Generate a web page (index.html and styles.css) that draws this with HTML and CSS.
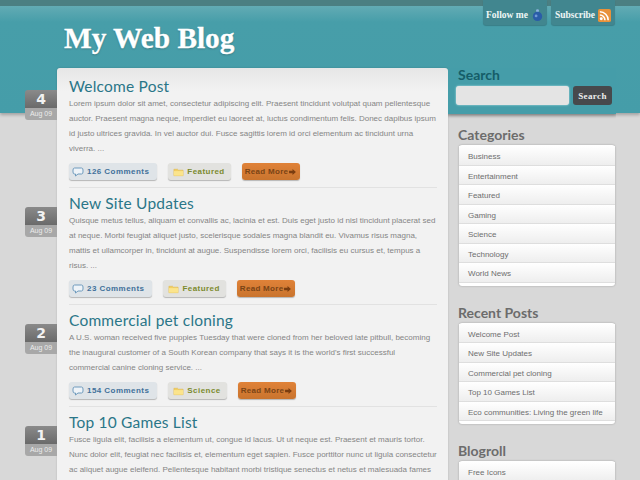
FILE: index.html
```html
<!DOCTYPE html>
<html lang="en">
<head>
<meta charset="utf-8">
<title>My Web Blog</title>
<link rel="stylesheet" href="styles.css">
</head>
<body>
<header class="header">
  <div class="header-links">
    <a class="hlink">Follow me
      <svg width="13" height="14" viewBox="0 0 14 14"><circle cx="7" cy="8.500" r="5" fill="#2a5da8"/><circle cx="7" cy="2.500" r="1.600" fill="#8fb4e0"/><path d="M6.300 3.500h1.400v3H6.300z" fill="#2a5da8"/><circle cx="5.500" cy="8" r="1.500" fill="#6f9ad6"/></svg>
    </a>
    <a class="hlink">Subscribe
      <svg width="13" height="13" viewBox="0 0 14 14"><rect width="14" height="14" rx="2" fill="#e8923a"/><circle cx="3.500" cy="10.500" r="1.600" fill="#fff"/><path d="M2 6.500a5.500 5.500 0 0 1 5.500 5.500M2 3a9 9 0 0 1 9 9" fill="none" stroke="#fff" stroke-width="1.700"/></svg>
    </a>
  </div>
  <h1 class="site-title">My Web Blog</h1>
</header>
<div class="layout">
  <main class="panel">
    <article class="post">
      <div class="date"><b>4</b><span>Aug 09</span></div>
      <h2>Welcome Post</h2>
      <p>Lorem ipsum dolor sit amet, consectetur adipiscing elit. Praesent tincidunt volutpat quam pellentesque auctor. Praesent magna neque, imperdiet eu laoreet at, luctus condimentum felis. Donec dapibus ipsum id justo ultrices gravida. In vel auctor dui. Fusce sagittis lorem id orci elementum ac tincidunt urna viverra. ...</p>
      <div class="meta">
        <a class="btn comments"><svg class="ico" width="12" height="10" viewBox="0 0 12 10"><path d="M2.500 1h7Q11 1 11 3v2Q11 7 9.500 7H6L3.500 9V7H2.500Q1 7 1 5V3Q1 1 2.500 1z" fill="#eef3f8" stroke="#6f9bbd"/></svg>126 Comments</a>
        <a class="btn cat"><svg class="ico" width="11" height="10" viewBox="0 0 12 10"><path d="M1 2h4l1 1h5v6H1z" fill="#f3cf62" stroke="#e0b84a" stroke-width=".6"/><path d="M1 4h10v5H1z" fill="#fbe48c"/></svg>Featured</a>
        <a class="btn more">Read More<svg class="arrow" width="7" height="6" viewBox="0 0 8 7"><path d="M0 2h4V0l4 3.500L4 7V5H0z" fill="#7a3d10"/></svg></a>
      </div>
    </article>
    <article class="post">
      <div class="date"><b>3</b><span>Aug 09</span></div>
      <h2>New Site Updates</h2>
      <p>Quisque metus tellus, aliquam et convallis ac, lacinia et est. Duis eget justo id nisl tincidunt placerat sed at neque. Morbi feugiat aliquet justo, scelerisque sodales magna blandit eu. Vivamus risus magna, mattis et ullamcorper in, tincidunt at augue. Suspendisse lorem orci, facilisis eu cursus et, tempus a risus. ...</p>
      <div class="meta">
        <a class="btn comments"><svg class="ico" width="12" height="10" viewBox="0 0 12 10"><path d="M2.500 1h7Q11 1 11 3v2Q11 7 9.500 7H6L3.500 9V7H2.500Q1 7 1 5V3Q1 1 2.500 1z" fill="#eef3f8" stroke="#6f9bbd"/></svg>23 Comments</a>
        <a class="btn cat"><svg class="ico" width="11" height="10" viewBox="0 0 12 10"><path d="M1 2h4l1 1h5v6H1z" fill="#f3cf62" stroke="#e0b84a" stroke-width=".6"/><path d="M1 4h10v5H1z" fill="#fbe48c"/></svg>Featured</a>
        <a class="btn more">Read More<svg class="arrow" width="7" height="6" viewBox="0 0 8 7"><path d="M0 2h4V0l4 3.500L4 7V5H0z" fill="#7a3d10"/></svg></a>
      </div>
    </article>
    <article class="post">
      <div class="date"><b>2</b><span>Aug 09</span></div>
      <h2>Commercial pet cloning</h2>
      <p>A U.S. woman received five puppies Tuesday that were cloned from her beloved late pitbull, becoming the inaugural customer of a South Korean company that says it is the world's first successful commercial canine cloning service. ...</p>
      <div class="meta">
        <a class="btn comments"><svg class="ico" width="12" height="10" viewBox="0 0 12 10"><path d="M2.500 1h7Q11 1 11 3v2Q11 7 9.500 7H6L3.500 9V7H2.500Q1 7 1 5V3Q1 1 2.500 1z" fill="#eef3f8" stroke="#6f9bbd"/></svg>154 Comments</a>
        <a class="btn cat"><svg class="ico" width="11" height="10" viewBox="0 0 12 10"><path d="M1 2h4l1 1h5v6H1z" fill="#f3cf62" stroke="#e0b84a" stroke-width=".6"/><path d="M1 4h10v5H1z" fill="#fbe48c"/></svg>Science</a>
        <a class="btn more">Read More<svg class="arrow" width="7" height="6" viewBox="0 0 8 7"><path d="M0 2h4V0l4 3.500L4 7V5H0z" fill="#7a3d10"/></svg></a>
      </div>
    </article>
    <article class="post">
      <div class="date"><b>1</b><span>Aug 09</span></div>
      <h2>Top 10 Games List</h2>
      <p>Fusce ligula elit, facilisis a elementum ut, congue id lacus. Ut ut neque est. Praesent et mauris tortor. Nunc dolor elit, feugiat nec facilisis et, elementum eget sapien. Fusce porttitor nunc ut ligula consectetur ac aliquet augue eleifend. Pellentesque habitant morbi tristique senectus et netus et malesuada fames</p>
    </article>
  </main>
  <aside class="sidebar">
    <section class="search">
      <h3>Search</h3>
      <form class="search-form">
        <input class="search-input" type="text" aria-label="Search">
        <button class="search-btn" type="button">Search</button>
      </form>
    </section>
    <section class="widget">
      <h3>Categories</h3>
      <ul>
        <li>Business</li><li>Entertainment</li><li>Featured</li><li>Gaming</li><li>Science</li><li>Technology</li><li>World News</li>
      </ul>
    </section>
    <section class="widget">
      <h3>Recent Posts</h3>
      <ul>
        <li>Welcome Post</li><li>New Site Updates</li><li>Commercial pet cloning</li><li>Top 10 Games List</li><li>Eco communities: Living the green life</li>
      </ul>
    </section>
    <section class="widget">
      <h3>Blogroll</h3>
      <ul>
        <li>Free Icons</li>
      </ul>
    </section>
  </aside>
</div>
</body>
</html>
```

FILE: styles.css
```css
* { box-sizing: border-box; }
html, body { margin: 0; padding: 0; }
body {
  width: 640px;
  height: 480px;
  overflow: hidden;
  background: #d8d8d8;
  font-family: "Liberation Sans", sans-serif;
  color: #777;
}
.header {
  height: 113px;
  padding-left: 64px;
  border-top: 6px solid #4b7f82;
  background: linear-gradient(#62abb4 0, #479ea9 16px, #459da9 100%);
  box-shadow: 0 2px 3px rgba(0,0,0,.25);
}
.header-links {
  display: flex;
  gap: 4px;
  height: 23px;
  margin-top: -6px;
  padding-left: 419px;
}
.hlink {
  display: flex;
  align-items: center;
  justify-content: center;
  gap: 3px;
  flex: 0 0 64px;
  height: 25px;
  padding-top: 5px;
  border-radius: 0 0 3px 3px;
  background: #41868f;
  box-shadow: 0 1px 1px rgba(0,0,0,.2);
  color: #eef6f6;
  white-space: nowrap;
  font: bold 9.500px "Liberation Serif", serif;
}
.site-title {
  margin: 0;
  color: #fff;
  font: bold 29.300px/30px "Liberation Serif", serif;
  -webkit-text-stroke: .3px #fff;
  text-shadow: 0 1px 2px rgba(0,0,0,.25);
}
.layout {
  display: flex;
  align-items: flex-start;
  gap: 10px;
  margin: -45px 0 0 57px;
  width: 559px;
}
.panel {
  flex: 0 0 391px;
  padding: 8px 11px 40px 12px;
  border-radius: 3px 3px 0 0;
  background: linear-gradient(#e6e6e6, #f2f2f2 24px, #f2f2f2);
  box-shadow: 0 0 2px rgba(0,0,0,.2);
}
.post { position: relative; padding-bottom: 7px; border-bottom: 1px solid #e2e2e2; margin-bottom: 5px; }
.post:last-child { border-bottom: 0; }
.post h2 {
  margin: 0;
  color: #2a7688;
  font: 15.500px/20px Lato, sans-serif;
  letter-spacing: .2px;
}
.post p {
  margin: 0;
  font-size: 8px;
  line-height: 15px;
  color: #858585;
}
.date {
  position: absolute;
  left: -44px;
  top: 14px;
  width: 32px;
  text-align: center;
}
.date b {
  display: block;
  height: 18px;
  border-radius: 3px 0 0 0;
  background: linear-gradient(#8a8a8a, #6a6a6a);
  color: #f2f2f2;
  font: bold 14px/18px "DejaVu Sans", sans-serif;
}
.date span {
  display: block;
  height: 12px;
  border-radius: 0 0 0 3px;
  background: #a8a8a8;
  color: #ececec;
  font-size: 7px;
  line-height: 12px;
}
.meta { display: flex; gap: 11px; margin-top: 7px; }
.btn {
  display: flex;
  align-items: center;
  height: 17px;
  border-radius: 3px;
  font-size: 8px;
  font-weight: bold;
  letter-spacing: .45px;
  box-shadow: 0 1px 1px rgba(0,0,0,.25);
}
.ico { margin-right: 3px; }
.arrow { margin-left: 1px; }
.comments { padding: 0 8px 0 3px; background: #dfe4e8; color: #41709a; }
.cat { padding: 0 6px 0 5px; background: #e2e2df; color: #7c8a2e; }
.more { padding: 0 4px 0 3px; letter-spacing: .3px; background: linear-gradient(#e08238, #c9742e); color: #7a4416; }
.sidebar { flex: 0 0 158px; }
.sidebar h3 {
  margin: 0;
  font: bold 14px/20px Lato, sans-serif;
  color: #6c6c6c;
}
.search {
  margin: -3px 0 11px -10px;
  padding: 0 4px 9px 8px;
  background: #459da9;
  box-shadow: 0 2px 3px rgba(0,0,0,.25);
  clip-path: inset(3px 0 -6px 0);
}
.sidebar .search h3 { color: #155d68; margin: 0 0 1px 2px; }
.search-form { display: flex; gap: 4px; }
.search-input {
  width: 113px;
  height: 19px;
  padding: 0;
  border: 0;
  border-radius: 3px;
  background: #e4e4e4;
  box-shadow: 0 0 2px #c8eef2;
}
.search-btn {
  width: 39px;
  height: 19px;
  padding: 0;
  border: 0;
  border-radius: 3px;
  background: #47494c;
  color: #eee;
  font: bold 9px "Liberation Serif", serif;
  letter-spacing: .4px;
}
.widget { margin-bottom: 17px; }
.widget ul {
  margin: 0 0 0 1px;
  padding: 1px 0 3px;
  width: 156px;
  list-style: none;
  border-radius: 3px;
  background: #fff;
  box-shadow: 0 0 2px rgba(0,0,0,.3);
}
.widget li {
  height: 19.500px;
  padding-left: 9px;
  border-bottom: 1px solid #dedede;
  background: linear-gradient(#fff, #eeeeee);
  font-size: 8px;
  line-height: 21px;
  color: #6e6e6e;
}
```
